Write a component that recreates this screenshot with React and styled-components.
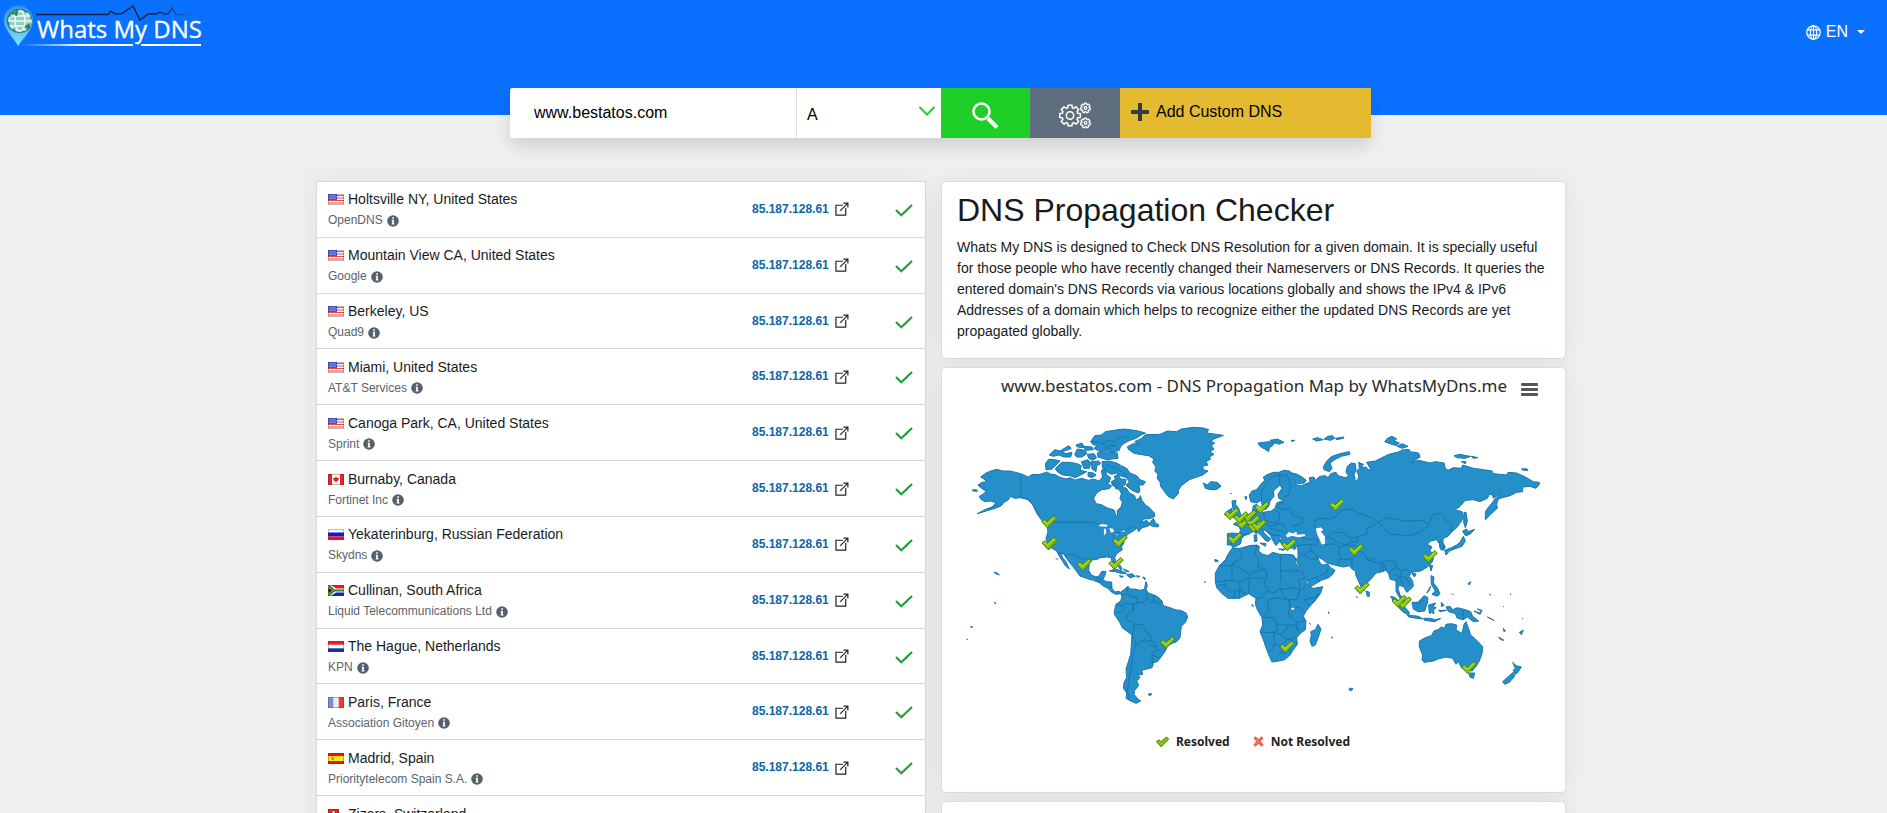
import React from "react";
import styled, { createGlobalStyle } from "styled-components";

const GlobalStyle = createGlobalStyle`
  *, *::before, *::after { box-sizing: border-box; }
  body {
    margin: 0;
    background: #efefef;
    color: #181b1e;
    font-family: "Liberation Sans", Arial, sans-serif;
    font-size: 14px;
    line-height: 21px;
  }
  h1, p, ul { margin: 0; padding: 0; }
  button, input, select { font-family: inherit; font-size: 16px; border: 0; border-radius: 0; }
  svg { display: block; flex: none; }
`;

const Header = styled.header`
  display: flex;
  justify-content: space-between;
  align-items: flex-start;
  min-height: 115px;
  background: #0a70ff;
`;

const LogoLink = styled.a`
  display: block;
`;

const LanguageButton = styled.button`
  display: flex;
  align-items: center;
  gap: 5px;
  margin: 20px 22px 0 0;
  padding: 0;
  background: none;
  color: #fff;
  line-height: 24px;
`;

const Caret = styled.span`
  margin-left: 4px;
  border-top: 4px solid #fff;
  border-left: 4px solid transparent;
  border-right: 4px solid transparent;
`;

const SearchArea = styled.div`
  margin-top: -27px;
  padding-right: 6px;
`;

const SearchForm = styled.form`
  display: flex;
  max-width: 861px;
  height: 50px;
  margin: 0 auto;
  border-radius: 3px;
  background: #fff;
  box-shadow: 0 8px 16px rgba(0, 0, 0, 0.13);
`;

const DomainInput = styled.input`
  flex: 1;
  min-width: 0;
  padding: 0 24px;
  border-right: 1px solid #dfe0e2;
  border-radius: 3px 0 0 3px;
  background: #fff;
  color: #000;
  outline: 0;
`;

const TypeField = styled.label`
  display: grid;
  width: 144px;
  align-items: center;

  > * { grid-area: 1 / 1; }
  > svg { justify-self: end; margin: 0 5px 4px 0; pointer-events: none; }
`;

const TypeSelect = styled.select`
  width: 100%;
  height: 50px;
  padding: 2px 30px 0 10px;
  appearance: none;
  background: transparent;
  color: #000;
  outline: 0;
`;

const ToolButton = styled.button`
  display: flex;
  align-items: center;
  justify-content: ${(p) => (p.$wide ? "flex-start" : "center")};
  gap: 7px;
  width: ${(p) => p.$width};
  padding: ${(p) => (p.$wide ? "0 11px 2px" : "4px 0 0")};
  background: ${(p) => p.$bg};
  color: #000;
`;

const Page = styled.main`
  padding: 43px 5px 40px 0;
`;

const Columns = styled.div`
  display: grid;
  grid-template-columns: 610fr 625fr;
  align-items: start;
  gap: 15px;
  max-width: 1250px;
  margin: 0 auto;
`;

const SideColumn = styled.div`
  display: flex;
  flex-direction: column;
  gap: 8px;
`;

const cardShadow = "0 0 24px rgba(0, 0, 0, 0.06)";

const ServerList = styled.ul`
  display: grid;
  grid-auto-rows: 1fr;
  min-height: 671px;
  list-style: none;
  border: 1px solid #d3d9de;
  border-bottom: 0;
  background: #fff;
  box-shadow: ${cardShadow};
`;

const ServerRow = styled.li`
  display: flex;
  align-items: center;
  padding: 0 12px 0 11px;
  border-bottom: 1px solid #d3d9de;
`;

const ServerInfo = styled.div`
  flex: 1;
  padding-top: 2px;
`;

const City = styled.div`
  display: flex;
  align-items: center;
  gap: 4px;
`;

const Provider = styled.div`
  display: flex;
  align-items: center;
  gap: 4px;
  color: #5a636c;
  font-size: 12px;
`;

const Address = styled.div`
  display: flex;
  align-items: center;
  gap: 6px;
  width: 143px;
`;

const AddressLink = styled.a`
  color: #0b66a3;
  font-size: 12px;
  font-weight: 700;
  text-decoration: none;
`;

const Status = styled.div`
  padding-top: 2px;
`;

const Card = styled.section`
  border: 1px solid #dcdcdc;
  border-radius: 4px;
  background: #fff;
  box-shadow: ${cardShadow};
`;

const IntroCard = styled(Card)`
  padding: 9px 15px 16px;
`;

const Title = styled.h1`
  margin-bottom: 8px;
  font-size: 32px;
  font-weight: 400;
  line-height: 38px;
`;

const ChartCard = styled(Card)`
  padding: 6px 7px 40px 18px;
  font-family: "Noto Sans", "Open Sans", sans-serif;
`;

const ChartHead = styled.div`
  display: flex;
  align-items: center;
  justify-content: flex-end;
  gap: 14px;
  margin-bottom: 13px;
  padding-right: 20px;
`;

const ChartTitle = styled.div`
  color: #2b2b2b;
  font-size: 17px;
  line-height: 24px;
`;

const MenuButton = styled.button`
  display: flex;
  flex-direction: column;
  gap: 2px;
  width: 17px;
  margin-top: 6px;
  padding: 0;
  background: none;
`;

const MenuBar = styled.span`
  height: 3px;
  border-radius: 1px;
  background: #555;
`;

const MapSvg = styled.svg`
  width: 100%;
  height: auto;
`;

const Legend = styled.div`
  display: flex;
  justify-content: center;
  gap: 23px;
  padding: 10px 12px 0 0;
`;

const LegendItem = styled.div`
  display: flex;
  align-items: center;
  gap: 7px;
  color: #222;
  font-size: 12px;
  font-weight: 700;
  line-height: 21px;
`;

const NextCard = styled(Card)`
  min-height: 60px;
`;

function Logo() {
  return (
    <svg width="206" height="50" viewBox="0 0 206 50" role="img" aria-label="Whats My DNS">
      <defs>
        <linearGradient id="pin" x1="0" y1="0" x2="0" y2="1">
          <stop offset="0" stopColor="#2e93e0" />
          <stop offset="1" stopColor="#7fe3ff" />
        </linearGradient>
        <linearGradient id="rule" x1="0" y1="0" x2="1" y2="0">
          <stop offset="0" stopColor="#fff" stopOpacity="0" />
          <stop offset="0.35" stopColor="#fff" />
          <stop offset="1" stopColor="#fff" />
        </linearGradient>
        <linearGradient id="pulse" gradientUnits="userSpaceOnUse" x1="36" y1="0" x2="194" y2="0">
          <stop offset="0" stopColor="#10243f" />
          <stop offset="0.75" stopColor="#10243f" />
          <stop offset="1" stopColor="#10243f" stopOpacity="0" />
        </linearGradient>
      </defs>
      <path d="M18 46C14 38 4 30 4 20A14.500 14.500 0 0 1 33 20C33 30 23 38 18 46Z" fill="url(#pin)" />
      <ellipse cx="19.500" cy="21" rx="13" ry="12" fill="#357f86" />
      <ellipse cx="20" cy="21" rx="11" ry="10" fill="#8ed2c4" />
      <g fill="none" stroke="#e9fbf3" strokeWidth="1.500">
        <ellipse cx="20" cy="21" rx="11" ry="10" strokeDasharray="5 3" />
        <ellipse cx="20" cy="21" rx="5" ry="10" />
        <path d="M9 21H31M11 16H29M11 26H29" />
      </g>
      <path d="M12 14L17 12 16 16M25 27L29 25 27 30" fill="none" stroke="#2f7f55" strokeWidth="2" />
      <path d="M36 14.500H108L111 11 115 14 122 13.500 127 10 133 6 140 20 148 14 156 14 160 12 165 14 168 14 172 8 176 14.500H194" fill="none" stroke="url(#pulse)" strokeWidth="1.500" />
      <text x="37" y="38" fill="#fff" stroke="#fff" strokeWidth="0.300" fontFamily="'Open Sans', 'Noto Sans', sans-serif" fontSize="24">Whats My DNS</text>
      <path d="M20 44H133V46H20ZM141 44H201V46H141Z" fill="url(#rule)" />
    </svg>
  );
}

function Globe() {
  return (
    <svg width="15" height="15" viewBox="0 0 16 16" fill="none" stroke="#fff" strokeWidth="1.300">
      <circle cx="8" cy="8" r="7.200" />
      <ellipse cx="8" cy="8" rx="3.400" ry="7.200" />
      <path d="M1 5.300H15M1 10.700H15M8 1V15" />
    </svg>
  );
}

function Chevron() {
  return (
    <svg width="18" height="11" viewBox="0 0 18 11" fill="none" stroke="#20cf2b" strokeWidth="2" strokeLinecap="round">
      <path d="M2 1.500L9 8.500 16 1.500" />
    </svg>
  );
}

function SearchIcon() {
  return (
    <svg width="27" height="27" viewBox="0 0 27 27" fill="none" stroke="#fff">
      <circle cx="9.500" cy="9.500" r="8" strokeWidth="2.600" />
      <path d="M16 16.500L25 25.500" strokeWidth="4" />
    </svg>
  );
}

const gearPath = (cx, cy, outer, inner, teeth) => {
  const points = [];
  for (let i = 0; i < teeth; i += 1) {
    const base = (i * 2 * Math.PI) / teeth - Math.PI / 2;
    [[-0.38, inner], [-0.24, outer], [0.24, outer], [0.38, inner]].forEach(([k, r]) => {
      const angle = base + (k * 2 * Math.PI) / teeth;
      points.push(`${(cx + r * Math.cos(angle)).toFixed(2)} ${(cy + r * Math.sin(angle)).toFixed(2)}`);
    });
  }
  return `M${points.join("L")}Z`;
};

function Gears() {
  return (
    <svg width="32" height="27" viewBox="0 0 32 27" fill="none" stroke="#fff" strokeWidth="1.500" strokeLinejoin="round">
      <path d={gearPath(11, 13.5, 10.5, 8, 8)} />
      <circle cx="11" cy="13.500" r="3.700" />
      <g strokeWidth="1.200">
        <path d={gearPath(26.5, 6, 5, 3.700, 7)} />
        <circle cx="26.500" cy="6" r="1.300" />
        <path d={gearPath(26.5, 21, 5, 3.700, 7)} />
        <circle cx="26.500" cy="21" r="1.300" />
      </g>
    </svg>
  );
}

function Plus() {
  return (
    <svg width="18" height="18" viewBox="0 0 18 18" fill="#343a40">
      <path d="M7 0H11V7H18V11H11V18H7V11H0V7H7Z" />
    </svg>
  );
}

function InfoIcon() {
  return (
    <svg width="12" height="12" viewBox="0 0 12 12">
      <circle cx="6" cy="6" r="5.800" fill="#56606a" />
      <path d="M5.200 2.300H6.900V3.700H5.200ZM4.700 4.800H6.900V8.400H7.500V9.400H4.600V8.400H5.200V5.700H4.700Z" fill="#fff" />
    </svg>
  );
}

function ExternalIcon() {
  return (
    <svg width="14" height="14" viewBox="0 0 15 15" fill="none" stroke="#212529" strokeWidth="1.300">
      <path d="M8.500 3.500H1V14H11.500V6.500M5.500 9.500L13 2M9 1.200H13.800V6" />
    </svg>
  );
}

function CheckIcon() {
  return (
    <svg width="18" height="13" viewBox="0 0 18 13" fill="none" stroke="#279c38" strokeWidth="2.200">
      <path d="M1 6L6.300 11.300 17 1" />
    </svg>
  );
}

const flags = {
  us: (
    <>
      <rect width="16" height="11" fill="#fff" />
      <path d="M0 1.500H16M0 4H16M0 6.500H16M0 9H16" stroke="#f0453c" strokeWidth="1.200" />
      <rect width="9" height="6" fill="#2f55e0" />
      <path d="M1.500 1.500H8M1.500 3H8M1.500 4.500H8" stroke="#cfdcff" strokeWidth="0.800" strokeDasharray="1 1" />
    </>
  ),
  ca: (
    <>
      <rect width="16" height="11" fill="#fff" />
      <path d="M0 0H4V11H0ZM12 0H16V11H12Z" fill="#e0272b" />
      <path d="M8 2L9 4 11 4 10 7H8.500V8.500H7.500V7H6L5 4 7 4Z" fill="#e0272b" />
    </>
  ),
  ru: (
    <>
      <rect width="16" height="11" fill="#fff" />
      <path d="M0 3.500H16V7.500H0Z" fill="#1414e8" />
      <path d="M0 7.500H16V11H0Z" fill="#f01414" />
    </>
  ),
  za: (
    <>
      <rect width="16" height="11" fill="#fff" />
      <path d="M3 0H16V3.500H8Z" fill="#f01c1c" />
      <path d="M3 11H16V7.500H8Z" fill="#1a1ac8" />
      <path d="M0 0L6 5.500 0 11M5 5.500H16" fill="none" stroke="#1d8a3a" strokeWidth="2.200" />
      <path d="M0 2L4.500 5.500 0 9Z" fill="#111" stroke="#e8c02a" strokeWidth="0.700" />
    </>
  ),
  nl: (
    <>
      <rect width="16" height="11" fill="#fff" />
      <path d="M0 0H16V3.700H0Z" fill="#e8232b" />
      <path d="M0 7.300H16V11H0Z" fill="#103a8c" />
    </>
  ),
  fr: (
    <>
      <rect width="16" height="11" fill="#eeeef0" />
      <path d="M0 0H5.300V11H0Z" fill="#7590dc" />
      <path d="M10.700 0H16V11H10.700Z" fill="#ee3a3a" />
    </>
  ),
  es: (
    <>
      <rect width="16" height="11" fill="#e8141c" />
      <path d="M0 3H16V8H0Z" fill="#ffe619" />
      <path d="M3.500 4H6V7H3.500Z" fill="#d98a4a" />
    </>
  ),
  ch: (
    <>
      <rect width="11" height="11" fill="#ea1c24" />
      <path d="M4.500 2H6.500V4.500H9V6.500H6.500V9H4.500V6.500H2V4.500H4.500Z" fill="#fff" />
    </>
  ),
};

function Flag({ code }) {
  const width = code === "ch" ? 11 : 16;
  return (
    <svg width="16" height="11" viewBox="0 0 16 11">
      {flags[code]}
      <rect x="0.500" y="0.500" width={width - 1} height="10" fill="none" stroke="#7a2020" strokeOpacity="0.350" />
    </svg>
  );
}

const servers = [
  ["us", "Holtsville NY, United States", "OpenDNS"],
  ["us", "Mountain View CA, United States", "Google"],
  ["us", "Berkeley, US", "Quad9"],
  ["us", "Miami, United States", "AT&T Services"],
  ["us", "Canoga Park, CA, United States", "Sprint"],
  ["ca", "Burnaby, Canada", "Fortinet Inc"],
  ["ru", "Yekaterinburg, Russian Federation", "Skydns"],
  ["za", "Cullinan, South Africa", "Liquid Telecommunications Ltd"],
  ["nl", "The Hague, Netherlands", "KPN"],
  ["fr", "Paris, France", "Association Gitoyen"],
  ["es", "Madrid, Spain", "Prioritytelecom Spain S.A."],
  ["ch", "Zizers, Switzerland", "Oskar Emmenegger"],
];

// Land outlines of the western part of the map.
const west = [
  // North and Central America
  "M62 198L78 186 92 180 110 175 128 180 150 180 182 188 205 198 215 191 240 190 262 183 270 189 285 191 300 199 318 204 330 200 345 207 365 202 385 208 400 205 418 209 428 198 424 178 436 174 440 192 452 200 447 215 440 218 455 224 448 233 425 236 410 246 401 262 408 278 424 281 440 290 462 297 467 312 473 317 471 299 483 288 487 274 480 262 484 248 478 236 466 232 468 218 458 214 466 205 463 196 474 190 482 204 498 205 496 220 486 228 500 232 508 246 524 254 527 266 538 262 541 254 546 268 556 282 566 288 583 306 584 316 570 323 552 324 540 336 560 328 568 338 564 346 546 350 536 362 532 350 520 360 503 370 497 378 491 385 492 396 484 408 487 416 470 428 464 440 470 462 466 466 456 452 454 440 440 438 420 440 412 445 395 447 388 458 386 478 394 492 408 498 418 494 424 482 438 481 434 496 428 506 440 512 455 513 456 532 464 543 478 541 480 548 468 550 455 544 444 532 428 524 418 515 400 508 382 503 360 495 350 482 338 466 322 446 312 430 302 424 308 440 318 452 328 474 316 464 306 448 298 436 290 420 270 408 264 396 258 384 264 360 260 345 254 338 244 326 232 310 226 298 218 280 204 266 182 260 165 262 150 256 146 266 132 274 124 284 106 292 84 298 66 304 52 308 74 296 96 288 108 276 92 270 74 272 62 264 58 256 72 248 78 240 62 230 54 222 66 214 80 212 72 204Z",
  // Newfoundland and Nova Scotia
  "M566 340L580 322 586 336 597 342 594 348 578 346Z",
  // Greenland
  "M502 107L520 98 538 98 524 92 545 82 556 71 600 70 622 60 650 62 664 54 700 49 730 51 746 56 740 66 768 70 790 73 762 84 752 90 764 96 754 104 762 114 750 122 762 130 748 138 752 144 738 152 744 162 728 166 730 176 744 180 728 192 700 202 688 206 664 224 656 236 655 248 640 264 624 256 612 240 602 226 600 212 592 204 594 190 584 180 588 168 578 154 582 144 566 134 545 131 522 127 506 116Z",
  // Iceland
  "M730 216L742 222 752 212 772 214 783 226 768 236 752 236 736 232Z",
  // Ellesmere and Devon
  "M392 92L404 74 424 72 436 62 462 58 490 54 516 57 534 60 556 66 540 74 528 82 510 88 494 96 482 106 478 118 458 124 440 118 420 122 402 112 412 102 400 102Z",
  "M412 126L436 122 472 126 474 142 440 146 414 138Z",
  // Victoria and Banks
  "M256 158L266 145 284 146 300 150 288 162 276 174 258 176Z",
  "M292 166L306 154 328 154 352 158 364 164 360 178 380 182 366 190 346 200 330 194 308 192 294 184 286 174Z",
  "M268 132L284 116 300 120 326 104 334 112 320 118 304 122 318 128 336 124 332 138 312 138 296 132 280 136Z",
  "M348 102L366 96 372 106 396 108 400 116 378 118 372 110 352 108Z",
  "M344 130L352 114 376 118 380 128 366 138 350 138Z",
  "M382 130L402 128 410 140 398 148 386 142Z",
  "M364 152L384 146 392 156 388 172 372 172Z",
  "M394 152L416 150 422 158 410 164 408 182 396 174Z",
  "M384 184L400 186 408 192 396 200 384 196Z",
  // Baffin
  "M426 152L448 150 470 156 484 164 500 172 510 186 530 194 540 206 556 212 550 222 536 222 540 236 536 246 520 240 508 232 498 222 508 214 500 200 480 194 470 186 454 190 440 182 428 172Z",
  "M454 212L466 206 478 216 472 228 458 224Z",
  // Caribbean
  "M448 480L466 474 486 480 500 488 486 488 466 482Z",
  "M500 492L516 488 526 496 510 500Z",
  "M478 494L490 496 484 500ZM530 494L540 496 532 499ZM474 466L480 462 486 474 482 476ZM490 474L496 476 508 482 498 482ZM548 498L557 502 554 506ZM558 512L562 524 557 538 554 530Z",
  // Hawaii and the Pacific
  "M102 483L112 486 118 492 110 490ZM32 646L38 648 34 650ZM104 574L108 576 104 577ZM20 684L24 686ZM36 237L50 236 52 241 40 240ZM764 446L775 450 766 452ZM732 511L736 514ZM288 442L292 446ZM876 580L880 586Z",
  // South America
  "M480 545L492 536 504 526 510 534 524 534 540 538 556 534 566 546 582 552 594 558 606 570 610 584 630 590 648 597 662 598 678 606 683 618 676 634 664 646 662 662 660 680 650 692 634 698 622 706 616 720 606 734 600 742 592 752 578 755 574 748 580 758 576 770 560 774 545 778 548 790 534 792 540 800 530 810 536 824 524 838 522 850 532 862 542 870 528 877 512 870 498 862 500 846 490 832 492 815 500 800 498 775 504 755 512 730 514 700 516 672 500 660 488 652 480 636 470 620 463 610 464 596 468 580 482 570 486 556Z",
  "M566 848L576 849 568 855Z",
];

// Land outlines of Europe, Africa and Asia.
const east = [
  // Eurasia
  "M148 252L156 240 170 236 182 220 194 208 190 198 204 190 220 184 236 184 252 178 268 180 276 186 292 190 306 198 319 208 312 216 296 218 284 212 292 222 304 224 318 218 330 214 328 200 342 198 346 208 360 196 376 194 384 200 392 188 408 184 414 194 436 200 446 194 438 184 442 166 454 156 466 158 468 176 462 192 466 204 458 212 474 206 476 194 470 180 478 172 476 154 490 160 484 170 498 168 504 176 514 178 500 154 526 150 546 140 566 130 592 124 610 116 628 116 630 122 656 126 660 138 634 154 656 148 690 156 706 152 732 156 736 172 744 178 760 170 784 172 788 162 820 172 850 176 876 180 880 188 920 192 924 184 950 186 972 196 990 206 1000 212 1018 214 1018 220 1008 232 990 226 968 228 968 242 950 244 930 254 900 262 894 266 890 280 892 292 872 310 856 326 856 302 866 288 876 276 888 260 902 244 880 262 878 252 868 250 862 262 840 272 820 266 796 268 778 288 764 296 786 302 790 318 782 334 770 350 754 364 744 376 730 382 728 394 736 408 730 418 720 412 718 398 710 386 692 390 682 400 696 408 690 418 698 432 700 446 694 456 682 468 662 480 644 482 632 486 628 496 638 510 640 526 628 538 620 544 612 528 598 522 594 532 600 552 612 566 616 580 606 572 594 552 588 540 588 510 570 504 566 488 558 478 540 484 528 486 510 508 496 520 492 540 485 532 478 516 468 494 466 480 456 474 448 464 430 468 404 462 380 456 366 444 352 438 360 456 368 462 384 460 392 470 405 478 398 490 386 500 364 508 344 520 330 528 322 508 310 490 300 472 290 450 284 448 294 440 294 418 290 404 272 412 250 406 240 392 244 382 236 376 240 390 228 404 218 388 212 374 200 362 188 354 192 366 206 378 212 384 204 392 196 388 184 374 172 364 158 362 146 370 132 374 124 384 122 398 112 404 98 410 94 402 82 402 82 368 98 366 116 368 122 358 116 346 100 340 112 332 126 330 140 314 156 306 158 296 160 284 170 280 172 300 190 304 214 300 226 290 230 276 240 272 252 270 236 262 234 250 246 232 240 222 220 240 222 256 210 270 206 286 196 296 188 292 184 268 170 276 152 272Z",
  // British Isles
  "M96 270L108 268 106 280 116 292 122 310 128 316 118 322 98 320 106 306 98 290Z",
  "M82 300L96 292 96 306 86 314 74 312Z",
  // Svalbard, Novaya Zemlya and the Arctic islands
  "M174 96L190 94 208 92 224 94 218 104 208 110 206 122 194 114 180 106ZM210 88L232 84 252 94 236 100 220 94ZM274 88L284 88 276 92Z",
  "M370 168L380 150 396 136 420 128 448 122 450 130 424 136 404 146 390 156 396 172 388 182 372 176Z",
  "M338 84L352 80 370 86 350 90ZM372 84L384 76 398 74 404 82 392 88ZM406 82L432 78 430 82 410 86Z",
  "M554 92L562 82 576 76 590 84 582 90 598 96 590 104 570 98ZM592 106L606 98 624 106 606 112Z",
  "M762 134L780 130 800 134 812 136 796 142 770 140ZM814 136L834 140 820 142ZM784 152L798 152 796 158ZM964 174L980 173 984 178 970 178Z",
  // Mediterranean islands
  "M162 372L170 372 171 390 164 392ZM180 396L198 398 196 406ZM236 414L256 414 250 418ZM278 412L288 408 284 416ZM166 366L169 362 170 370Z",
  // Africa
  "M96 412L120 412 148 404 170 402 178 406 176 420 188 430 204 434 218 424 240 430 262 430 280 432 288 444 284 450 300 478 312 496 320 516 332 530 342 532 368 527 362 546 348 566 330 586 318 600 310 616 318 630 316 656 300 668 290 680 292 700 280 716 270 732 254 746 236 750 216 753 208 736 198 710 190 686 180 662 188 642 186 620 172 596 166 580 168 562 158 556 146 548 118 562 84 562 66 548 50 530 46 512 46 486 58 464 76 446 84 430Z",
  // Madagascar
  "M354 640L363 654 356 676 346 702 336 706 330 690 334 672 332 662 346 656Z",
  "M498 540L508 544 508 556 502 556ZM448 832L458 832 456 838 448 838ZM12 510L16 514ZM46 446L54 450ZM385 602L387 608ZM394 678L399 681ZM328 636L331 640ZM156 582L158 586ZM469 556L472 560ZM134 258L140 256 138 266ZM92 246L94 249Z",
];

// Land outlines of the Far East and Oceania.
const pacific = [
  // Japan and Sakhalin
  "M342 304L348 304 352 330 346 350 341 334ZM338 360L350 354 354 362 374 355 360 370 346 374ZM340 376L346 390 336 406 320 412 300 418 288 432 284 418 304 410 320 402 330 394ZM268 392L278 392 282 410 274 418Z",
  "M238 462L248 464 243 480ZM186 488L198 488 194 498Z",
  // Philippines
  "M243 494L252 498 250 516 262 530 270 548 262 556 246 550 256 540 244 520ZM230 546L242 526 238 538Z",
  // Indonesia
  "M122 556L136 560 150 574 166 590 178 604 176 612 158 602 140 584 130 570Z",
  "M172 612L190 614 206 616 218 624 200 622 176 618ZM220 622L240 622 256 626 272 622 254 632 224 628Z",
  "M186 574L204 574 222 554 234 560 232 576 224 600 204 602 190 594Z",
  "M236 582L258 576 248 586 258 590 250 598 252 608 244 604 238 608ZM274 574L282 584 274 586ZM266 598L290 598 270 602Z",
  // New Guinea
  "M288 588L300 586 308 596 322 590 346 596 362 602 368 616 386 630 370 632 352 618 340 626 322 622 316 608 296 602ZM372 600L390 606 394 600 382 594 396 598 390 610ZM412 618L432 628 424 624ZM446 678L462 688 452 686ZM460 652L466 660 462 662ZM508 664L520 658 514 671Z",
  // Australia
  "M208 690L226 680 244 674 252 660 264 656 274 648 284 652 288 640 304 638 320 642 318 656 330 664 336 668 342 640 348 632 356 654 362 672 376 684 386 694 398 708 396 728 388 750 378 766 366 780 344 776 334 770 326 752 318 760 308 742 288 738 264 744 250 750 222 754 216 746 218 732 208 708Z",
  "M356 786L374 786 370 802 360 798Z",
  // New Zealand
  "M488 754L498 764 514 768 502 786 496 790 490 778 496 772ZM490 784L494 796 478 814 464 820 458 812 476 796Z",
  "M354 518L362 512 358 522ZM306 548L309 551ZM418 550L422 552ZM480 549L483 551ZM460 586L462 588ZM516 621L518 623Z",
];

const westBorders =
  "M182 188V260M182 260L200 262 214 276 226 294 240 316M262 334H400L412 338 430 340M464 366L480 364 500 354 520 348 530 344M290 420L318 432 345 432 362 446 376 440 390 456M428 506L412 502 400 498M418 515L430 504M444 532L456 526M504 526L500 544 510 556 530 560 532 576 520 580 522 600M500 548L486 556M468 580L490 586 500 576 520 580M520 580L518 598 500 612 500 626 520 634 524 650 516 672 524 690M532 576L550 574 562 560 558 546M562 560L572 576 586 570 598 578 606 570M582 552L580 570M524 640L548 640 560 664 574 676 576 690 590 704 588 716 604 720M524 690L528 700 554 686 576 690M554 686L572 706 590 704M588 716L574 732 580 750M574 732L600 740M528 700L518 730 516 760 508 800 502 840 510 868M471 604L486 600 494 590M424 102L440 88 462 92 480 80 500 76M392 92L420 94 440 104 470 104M430 110L454 112M438 160L456 168 470 172 486 182 500 196";
const eastBorders =
  "M184 268L186 240 200 214 220 196 238 190 252 196 262 190M238 190L240 222M262 190L272 230 264 252 252 258M226 286L250 296 272 292 276 310 310 324 300 340 276 346M236 280L254 276M190 304L196 330 182 340M226 300L238 304 240 324 224 336 196 330M224 336L250 340 262 364M196 340L212 346 230 342M204 350L232 358 256 364M206 362L222 374 240 372M168 318L172 340 180 352M150 326L164 336 162 352M120 368L146 370M94 372L92 402M306 378L322 386 350 384M290 404L330 400 350 404 354 384M330 400L336 420 356 440M336 420L310 430 296 426M310 430L330 444 352 444M298 440L310 430M318 508L350 498 380 484 384 470M350 498L358 510M345 350L344 328 362 322 388 324 410 316 420 298 456 294 476 306 494 312 516 320 534 332M534 332L522 342 500 352 500 370 472 376 454 384 430 366 400 362 386 378 372 382M386 378L410 392 436 402 454 392 472 394 474 376M376 402L400 398 420 408 414 430 424 440 412 460M420 408L440 404 462 402 478 420 460 440 440 446 416 444M478 420L494 430 504 448 528 454 544 456 558 450 584 448M460 440L454 456 460 470M504 448L500 440 524 446M534 332L566 320 590 326 620 330 664 328 686 340 680 350 640 372 610 374 570 368 550 350 534 332M686 340L700 310 724 308 740 330 758 344 750 362M544 456L540 480M558 478L552 456M584 448L590 470 604 480 600 496 588 510M604 480L620 474 634 484M600 496L620 500 630 522M588 470L572 478 568 490M120 418L126 440 98 458 96 468M60 464H96M96 468V508L52 512M96 458L148 490 168 480M170 402L166 430 176 446 174 466 198 476M148 490L144 502 120 512 96 508M168 480L198 476M241 430V512M241 480H300M198 476L200 500 192 520 204 540M148 504L172 500 194 504M148 504L146 548M120 516L118 562M104 540L128 536 134 552M74 516L82 538 104 540 102 562M54 524L74 520M204 540L220 546 240 532 260 534 280 528 300 540 296 506 316 502M204 540L190 550 186 560 168 562M240 532L250 552 266 566 290 566 300 540M300 540L322 520M330 586L312 566 344 560 362 546M266 566L270 590 264 606 272 620 290 632 316 630M270 590L300 590 316 606M272 590L268 566M186 620L206 618 222 622 230 640 232 660 220 664M204 566L206 600 190 616M206 566L230 560 262 566M180 664L220 664 240 670 256 660 264 644 284 640 296 660M230 640L250 640 264 644M222 664V700L214 722M222 700L244 704 262 684 280 690M240 670L256 680 270 684 290 680M262 716L270 722M240 724L250 718 254 728ZM290 632L292 660";
const pacificBorders = "M340 596V626M188 574L206 578 222 566M300 420L316 410M100 482L98 458M134 488L150 500 160 520";

// Seas and lakes inside the land outlines.
const lakes = [
  "M256 374L266 362 280 366 290 360 292 370 314 368 318 376 296 380 276 376 262 380Z",
  "M346 352L362 348 372 356 364 362 376 376 376 400 364 402 358 386 350 370Z",
  "M272 590L284 588 284 596 274 598Z",
];
const greatLakes = [
  "M412 344L424 338 442 340 444 348 424 348ZM430 354L438 350 440 366 432 376ZM446 350L460 352 464 364 452 366ZM456 374L478 366 474 372ZM478 362L496 356 494 364Z",
];

const markers = [
  [267, 332], [271, 399], [268, 396], [480, 390], [373, 460], [468, 457], [623, 694],
  [850, 335], [878, 330], [886, 346], [868, 314], [843, 319], [815, 308], [897, 343], [906, 289],
  [825, 382], [987, 401], [1131, 281], [1188, 416], [1206, 531], [981, 707],
  [1333, 575], [1318, 570], [1410, 436], [1527, 769],
];

const tickPath = "M-22 0L-13 -7 -6 1 14 -17 22 -10 -5 18Z";
const tickShine = "M-17 -1L-13 -3 -6 6 14 -12";

function WorldMap() {
  return (
    <MapSvg viewBox="0 0 1794 930" role="img" aria-label="World map of resolved DNS servers">
      <g fill="#258fca" stroke="#1976ae" strokeWidth="3" strokeLinejoin="round">
        <path d={west.join("")} />
        <path d={westBorders} fill="none" />
        <path d={greatLakes.join("")} fill="#fff" strokeWidth="2" />
        <g transform="translate(720 0)">
          <path d={east.join("")} />
          <path d={eastBorders} fill="none" />
          <path d={lakes.join("")} fill="#fff" strokeWidth="2" />
        </g>
        <g transform="translate(1170 0)">
          <path d={pacific.join("")} />
          <path d={pacificBorders} fill="none" />
        </g>
      </g>
      {markers.map(([x, y]) => (
        <g key={`${x}-${y}`} transform={`translate(${x} ${y})`} strokeLinejoin="round">
          <path d={tickPath} fill="#8cc90e" stroke="#4c8210" strokeWidth="3" />
          <path d={tickShine} fill="none" stroke="#b4e33a" strokeWidth="3" />
        </g>
      ))}
    </MapSvg>
  );
}

function LegendTick() {
  return (
    <svg width="13" height="12" viewBox="-24 -21 48 44" strokeLinejoin="round">
      <path d={tickPath} fill="#8cc90e" stroke="#5c9418" strokeWidth="4" />
    </svg>
  );
}

function LegendCross() {
  return (
    <svg width="11" height="11" viewBox="0 0 11 11" strokeLinejoin="round">
      <path d="M1 2L2.500 0.800 5.500 3.600 8.500 0.800 10 2 7.400 5.500 10.300 9 8.800 10.300 5.500 7.500 2.300 10.300 0.800 9 3.600 5.500Z" fill="#f8705c" stroke="#e2432f" strokeWidth="0.800" />
    </svg>
  );
}

export default function App() {
  return (
    <>
      <GlobalStyle />
      <Header>
        <LogoLink href="/">
          <Logo />
        </LogoLink>
        <LanguageButton type="button" aria-haspopup="true">
          <Globe />
          EN
          <Caret />
        </LanguageButton>
      </Header>
      <SearchArea>
        <SearchForm onSubmit={(e) => e.preventDefault()}>
          <DomainInput type="text" defaultValue="www.bestatos.com" aria-label="Domain" />
          <TypeField>
            <TypeSelect defaultValue="A" aria-label="Record type">
              {["A", "AAAA", "CNAME", "MX", "NS", "TXT"].map((type) => (
                <option key={type}>{type}</option>
              ))}
            </TypeSelect>
            <Chevron />
          </TypeField>
          <ToolButton type="submit" $width="89px" $bg="#1ecf28" aria-label="Search">
            <SearchIcon />
          </ToolButton>
          <ToolButton type="button" $width="90px" $bg="#5f6e7e" aria-label="Settings">
            <Gears />
          </ToolButton>
          <ToolButton type="button" $wide $width="251px" $bg="#e4bb30">
            <Plus />
            Add Custom DNS
          </ToolButton>
        </SearchForm>
      </SearchArea>
      <Page>
        <Columns>
          <ServerList>
            {servers.map(([code, city, provider]) => (
              <ServerRow key={city}>
                <ServerInfo>
                  <City>
                    <Flag code={code} />
                    {city}
                  </City>
                  <Provider>
                    {provider}
                    <InfoIcon />
                  </Provider>
                </ServerInfo>
                <Address>
                  <AddressLink href="#ip">85.187.128.61</AddressLink>
                  <ExternalIcon />
                </Address>
                <Status>
                  <CheckIcon />
                </Status>
              </ServerRow>
            ))}
          </ServerList>
          <SideColumn>
            <IntroCard>
              <Title>DNS Propagation Checker</Title>
              <p>
                Whats My DNS is designed to Check DNS Resolution for a given domain. It is specially useful for those
                people who have recently changed their Nameservers or DNS Records. It queries the entered domain's DNS
                Records via various locations globally and shows the IPv4 &amp; IPv6 Addresses of a domain which helps
                to recognize either the updated DNS Records are yet propagated globally.
              </p>
            </IntroCard>
            <ChartCard>
              <ChartHead>
                <ChartTitle>www.bestatos.com - DNS Propagation Map by WhatsMyDns.me</ChartTitle>
                <MenuButton type="button" aria-label="Chart menu">
                  <MenuBar />
                  <MenuBar />
                  <MenuBar />
                </MenuButton>
              </ChartHead>
              <WorldMap />
              <Legend>
                <LegendItem>
                  <LegendTick />
                  Resolved
                </LegendItem>
                <LegendItem>
                  <LegendCross />
                  Not Resolved
                </LegendItem>
              </Legend>
            </ChartCard>
            <NextCard />
          </SideColumn>
        </Columns>
      </Page>
    </>
  );
}
